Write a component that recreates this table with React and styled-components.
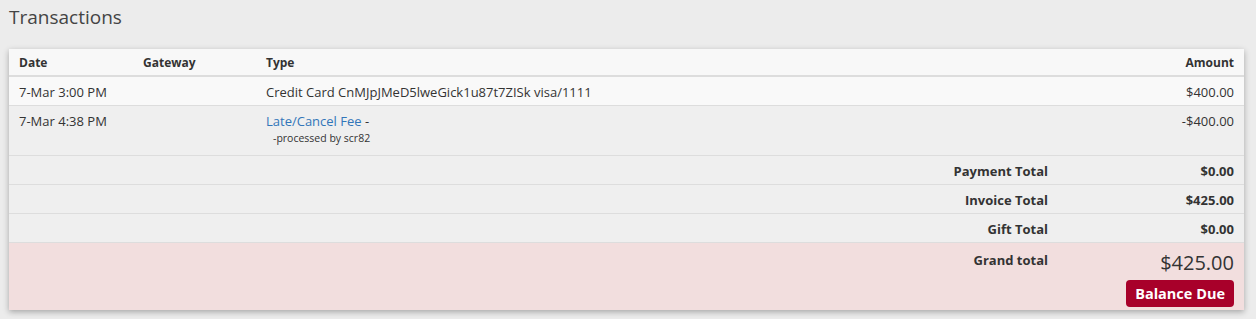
import styled, { createGlobalStyle } from "styled-components";

const GlobalStyle = createGlobalStyle`
  body {
    margin: 0;
    background: #ececec;
    font-family: "Open Sans", "Liberation Sans", sans-serif;
    color: #333;
  }
`;

const rows = [
  { date: "7-Mar 3:00 PM", gateway: "", type: "Credit Card CnMJpJMeD5lweGick1u87t7ZISk visa/1111", amount: "$400.00", tone: "light" },
  { date: "7-Mar 4:38 PM", gateway: "", link: "Late/Cancel Fee", note: "-processed by scr82", amount: "-$400.00", tone: "dark" },
];

const totals = [
  { label: "Payment Total", value: "$0.00" },
  { label: "Invoice Total", value: "$425.00" },
  { label: "Gift Total", value: "$0.00" },
];

export default function App() {
  return (
    <Page>
      <GlobalStyle />
      <Title>Transactions</Title>
      <Card>
        <Table>
          <colgroup>
            <col style={{ width: 124 }} />
            <col style={{ width: 123 }} />
            <col />
            <col style={{ width: 186 }} />
          </colgroup>
          <thead>
            <HeadRow>
              <Th>Date</Th>
              <Th>Gateway</Th>
              <Th>Type</Th>
              <Th $right>Amount</Th>
            </HeadRow>
          </thead>
          <tbody>
            {rows.map((r, i) => (
              <Row key={i} $tone={r.tone}>
                <Td>{r.date}</Td>
                <Td>{r.gateway}</Td>
                <Td>
                  {r.link ? (
                    <>
                      <Link href="#">{r.link}</Link> -
                      <Note>{r.note}</Note>
                    </>
                  ) : (
                    r.type
                  )}
                </Td>
                <Td $right>{r.amount}</Td>
              </Row>
            ))}
            {totals.map((t) => (
              <Row key={t.label} $tone="dark">
                <TotalLabel colSpan={3}>{t.label}</TotalLabel>
                <TotalLabel>{t.value}</TotalLabel>
              </Row>
            ))}
            <GrandRow>
              <TotalLabel colSpan={3} $top={8}>Grand total</TotalLabel>
              <GrandCell>
                <GrandAmount>$425.00</GrandAmount>
                <BalanceBadge>Balance Due</BalanceBadge>
              </GrandCell>
            </GrandRow>
          </tbody>
        </Table>
      </Card>
    </Page>
  );
}

const Page = styled.div`
  padding: 4px 12px 9px 9px;
`;

const Title = styled.h3`
  margin: 0 0 18px;
  font-size: 19px;
  font-weight: 400;
  line-height: 27px;
  color: #444;
`;

const Card = styled.div`
  background: #f0f0f0;
  box-shadow: 0 2px 6px rgba(0, 0, 0, 0.3);
`;

const Table = styled.table`
  width: 100%;
  border-collapse: collapse;
  table-layout: fixed;
  font-size: 13px;
`;

const HeadRow = styled.tr`
  background: #f8f8f8;
  border-bottom: 2px solid #ddd;
`;

const Th = styled.th`
  height: 27px;
  padding: 0 10px;
  box-sizing: border-box;
  font-size: 12px;
  font-weight: 700;
  color: #333;
  text-align: ${(p) => (p.$right ? "right" : "left")};
  vertical-align: middle;
`;

const Row = styled.tr`
  background: ${(p) => (p.$tone === "light" ? "#f9f9f9" : "#efefef")};
  border-bottom: 1px solid #ddd;
`;

const Td = styled.td`
  padding: 6px 10px 4px;
  line-height: 18px;
  vertical-align: top;
  color: #333;
  text-align: ${(p) => (p.$right ? "right" : "left")};
  white-space: nowrap;
`;

const Link = styled.a`
  color: #3276b9;
  text-decoration: none;
`;

const Note = styled.div`
  margin: 1px 0 6px 7px;
  font-size: 10.5px;
  line-height: 14px;
`;

const TotalLabel = styled.td`
  padding: ${(p) => p.$top || 6}px 10px 4px;
  line-height: 18px;
  text-align: right;
  font-weight: 700;
  vertical-align: top;
`;

const GrandRow = styled.tr`
  background: #f2dede;
`;

const GrandCell = styled.td`
  padding: 6px 10px 3px;
  text-align: right;
  vertical-align: top;
`;

const GrandAmount = styled.div`
  font-size: 20px;
  line-height: 28px;
  color: #333;
`;

const BalanceBadge = styled.span`
  display: inline-block;
  margin-top: 3px;
  padding: 0 9px;
  height: 27px;
  line-height: 27px;
  border-radius: 4px;
  background: #a8002a;
  color: #fff;
  font-size: 14.5px;
  font-weight: 700;
`;
